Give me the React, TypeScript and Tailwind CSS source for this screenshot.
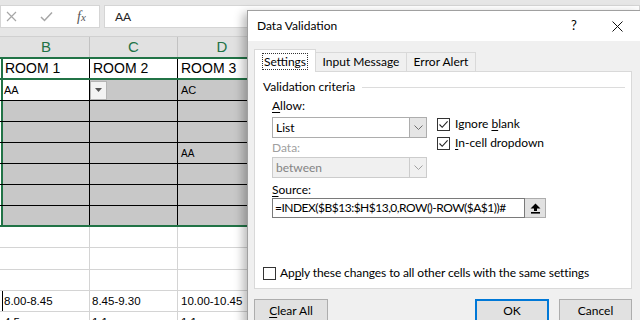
import React from 'react'

const Check = () => (
  <svg width="11" height="11" viewBox="0 0 11 11" className="block">
    <path d="M1.5 5.5 L4.2 8.3 L9.6 2.4" fill="none" stroke="#222" strokeWidth="1.1" />
  </svg>
)

const CheckBox = ({ checked }: { checked?: boolean }) => (
  <div className="w-[13px] h-[13px] shrink-0 border border-[#333] bg-white flex items-center justify-center">
    {checked && <Check />}
  </div>
)

const Chevron = ({ color = '#6d6d6d' }: { color?: string }) => (
  <svg width="9" height="5" viewBox="0 0 9 5">
    <path d="M0.5 0.5 L4.5 4.5 L8.5 0.5" fill="none" stroke={color} strokeWidth="1" />
  </svg>
)

const Select = ({ value, disabled }: { value: string; disabled?: boolean }) => (
  <div
    className={
      disabled
        ? 'w-[155px] h-[21px] flex border border-[#cccccc] bg-[#f0f0f0]'
        : 'w-[155px] h-[21px] flex border border-[#adadad] bg-white'
    }
  >
    <div className={disabled ? 'flex-1 pl-[3px] flex items-center text-[#838383]' : 'flex-1 pl-[3px] flex items-center'}>
      {value}
    </div>
    <div
      className={
        disabled
          ? 'w-[17px] border-l border-[#cccccc] bg-[#f0f0f0] flex items-center justify-center'
          : 'w-[17px] border-l border-[#adadad] bg-[#e5e5e5] flex items-center justify-center'
      }
    >
      <Chevron color={disabled ? '#a0a0a0' : '#6d6d6d'} />
    </div>
  </div>
)

function SheetRow({ className, stub, cells }: { className: string; stub: string; cells: [string, React.ReactNode][] }) {
  return (
    <div className={`flex shrink-0 ${className}`}>
      <div className={`w-[3px] shrink-0 ${stub}`} />
      {cells.map(([cls, content], i) => (
        <div key={i} className={`shrink-0 flex items-center overflow-hidden whitespace-nowrap ${cls}`}>
          {content}
        </div>
      ))}
    </div>
  )
}

const greyRow = (d?: React.ReactNode, last?: boolean) => (
  <SheetRow
    className={last ? 'h-[19px] bg-[#c8c8c8]' : 'h-[21px] bg-[#c8c8c8] border-b border-black'}
    stub="border-r-2 border-[#217346] bg-white"
    cells={[
      ['w-[87px] border-r border-black', null],
      ['w-[88px] border-r border-black', null],
      ['w-[88px] pl-[3px] text-[10px]', d],
    ]}
  />
)

const whiteRow = (h: string) => (
  <SheetRow
    className={`${h} bg-white border-b border-[#d4d4d4]`}
    stub="bg-white"
    cells={[
      ['w-[87px] border-r border-[#d4d4d4]', null],
      ['w-[88px] border-r border-[#d4d4d4]', null],
      ['w-[88px]', null],
    ]}
  />
)

export default function App() {
  return (
    <div className="relative w-[640px] h-[320px] overflow-hidden bg-white font-['Liberation_Sans',sans-serif] text-[11px] text-black">
      {/* formula bar */}
      <div className="h-[37px] bg-[#e6e6e6] pt-[5px] flex flex-col">
        <div className="flex h-[23px]">
          <div className="w-[100px] bg-white border border-[#d5d5d5] flex items-center">
            <svg width="11" height="11" viewBox="0 0 11 11" className="ml-[5px]">
              <path d="M1 1 L10 10 M10 1 L1 10" stroke="#a6a6a6" strokeWidth="1.2" />
            </svg>
            <svg width="13" height="11" viewBox="0 0 13 11" className="ml-[23px]">
              <path d="M1 6 L4.5 9.5 L12 1.5" fill="none" stroke="#a6a6a6" strokeWidth="1.5" />
            </svg>
            <span className="ml-[24px] font-['Liberation_Serif',serif] italic text-[14px] text-[#555] leading-none">
              f<span className="text-[11px]">x</span>
            </span>
          </div>
          <div className="ml-[4px] flex-1 bg-white border border-[#d5d5d5] flex items-center pl-[10px] font-['Lato',sans-serif] text-[12px] text-[#222]">
            AA
          </div>
        </div>
        <div className="mt-auto h-px bg-[#d0d0d0]" />
      </div>

      {/* column headers */}
      <SheetRow
        className="h-[22px] bg-[#e1e1e1] border-b-2 border-[#217346] text-[15px] text-[#217346]"
        stub="bg-[#e1e1e1]"
        cells={[
          ['w-[87px] justify-center border-r border-[#c2c2c2]', 'B'],
          ['w-[88px] justify-center border-r border-[#c2c2c2]', 'C'],
          ['w-[88px] justify-center', 'D'],
        ]}
      />

      {/* ROOM row */}
      <SheetRow
        className="h-[21px] bg-white border-b-2 border-[#217346] text-[14px]"
        stub="border-r-2 border-[#217346] bg-white"
        cells={[
          ['w-[87px] pl-[2px] border-r border-black', 'ROOM 1'],
          ['w-[88px] pl-[3px] border-r border-black', 'ROOM 2'],
          ['w-[88px] pl-[3px]', 'ROOM 3'],
        ]}
      />

      {/* row with dropdown */}
      <SheetRow
        className="h-[21px] bg-[#c8c8c8] border-b border-black"
        stub="border-r-2 border-[#217346] bg-white"
        cells={[
          ['w-[87px] pl-[1px] bg-white border-r border-black', 'AA'],
          [
            'w-[88px] border-r border-black',
            <div className="w-[17px] h-[19px] bg-[#f3f3f3] border border-[#b5b5b5] flex items-center justify-center">
              <svg width="7" height="4" viewBox="0 0 7 4">
                <path d="M0 0 H7 L3.5 4 Z" fill="#555" />
              </svg>
            </div>,
          ],
          ['w-[88px] pl-[3px]', 'AC'],
        ]}
      />

      {greyRow()}
      {greyRow()}
      {greyRow('AA')}
      {greyRow()}
      {greyRow()}
      {greyRow(undefined, true)}
      <div className="h-[2px] bg-[#217346]" />

      {whiteRow('h-[21px]')}
      {whiteRow('h-[22px]')}
      {whiteRow('h-[21px]')}
      <SheetRow
        className="h-[21px] bg-white border-b border-[#d4d4d4] text-[11.5px]"
        stub="border-r border-black bg-white"
        cells={[
          ['w-[87px] pl-[1px] pt-[2px] border-r border-[#d4d4d4]', '8.00-8.45'],
          ['w-[88px] pl-[2px] pt-[2px] border-r border-[#d4d4d4]', '8.45-9.30'],
          ['w-[88px] pl-[3px] pt-[2px]', '10.00-10.45'],
        ]}
      />
      <SheetRow
        className="h-[12px] bg-white text-[11.5px] leading-[12px] items-start"
        stub="border-r border-black bg-white"
        cells={[
          ['w-[87px] pl-[1px] pt-[4px] border-r border-[#d4d4d4]', '4.5.'],
          ['w-[88px] pl-[2px] pt-[4px] border-r border-[#d4d4d4]', '1.1'],
          ['w-[88px] pl-[3px] pt-[4px]', '1.1'],
        ]}
      />

      {/* Data Validation dialog */}
      <div className="absolute left-[247px] top-[10px] w-[394px] h-[320px] bg-[#f0f0f0] border border-[#a0a0a0] shadow-[-4px_3px_9px_rgba(0,0,0,0.28)] font-['Lato',sans-serif] text-[12px] text-black flex flex-col">
        <div className="h-[30px] bg-white flex items-center shrink-0">
          <span className="flex-1 pl-[9px]">Data Validation</span>
          <span className="w-[40px] text-center text-[13px]">?</span>
          <span className="w-[46px] flex justify-center">
            <svg width="11" height="11" viewBox="0 0 11 11">
              <path d="M0.5 0.5 L10.5 10.5 M10.5 0.5 L0.5 10.5" stroke="#111" strokeWidth="1" />
            </svg>
          </span>
        </div>

        <div className="px-[6px] flex flex-col">
          {/* tabs */}
          <div className="flex items-end pt-[7px] h-[30px]">
            <div className="w-[62px] h-[23px] bg-white border border-[#d9d9d9] border-b-0 -mb-px relative z-10 flex items-center justify-center">
              <span className="px-[1px] leading-[15px] outline-1 outline-dotted outline-[#333]">Settings</span>
            </div>
            <div className="w-[91px] h-[19px] border-t border-r border-[#d9d9d9] flex items-center justify-center">Input Message</div>
            <div className="w-[69px] h-[19px] border-t border-r border-[#d9d9d9] flex items-center justify-center">Error Alert</div>
          </div>

          {/* panel */}
          <div className="w-[378px] h-[218px] bg-white border border-[#d9d9d9] flex flex-col">
            <div className="mt-[7px] flex items-center pl-[8px] leading-[16px]">
              <span>Validation criteria</span>
              <div className="flex-1 h-px bg-[#dcdcdc] ml-[7px] mr-[6px]" />
            </div>

            <div className="pl-[17px] flex flex-col leading-[16px]">
              <div className="mt-[3px]">
                <u className="underline-offset-2">A</u>llow:
              </div>
              <div className="mt-[3px] flex">
                <div className="flex flex-col">
                  <Select value="List" />
                  <div className="mt-[2px] text-[#a0a0a0]">Data:</div>
                  <div className="mt-[1px]">
                    <Select value="between" disabled />
                  </div>
                </div>
                <div className="ml-[10px] flex flex-col">
                  <div className="mt-[-1px] flex items-center gap-[5px]">
                    <CheckBox checked />
                    <span>
                      Ignore <u className="underline-offset-2">b</u>lank
                    </span>
                  </div>
                  <div className="mt-[3px] flex items-center gap-[5px]">
                    <CheckBox checked />
                    <span>
                      <u className="underline-offset-2">I</u>n-cell dropdown
                    </span>
                  </div>
                </div>
              </div>
              <div className="mt-[4px]">
                <u className="underline-offset-2">S</u>ource:
              </div>
              <div className="flex h-[20px]">
                <div className="w-[253px] border border-[#7a7a7a] bg-white flex items-center pl-[2px] whitespace-nowrap overflow-hidden tracking-[-0.5px]">
                  =INDEX($B$13:$H$13,0,ROW()-ROW($A$1))#
                </div>
                <div className="w-[21px] bg-[#e1e1e1] border border-[#adadad] border-l-0 flex items-center justify-center">
                  <svg width="11" height="11" viewBox="0 0 11 11">
                    <path d="M5.5 0.5 L10.5 5.5 H7 V8 H4 V5.5 H0.5 Z" fill="#000" />
                    <rect x="1" y="9" width="9" height="1.6" fill="#000" />
                  </svg>
                </div>
              </div>
            </div>

            <div className="mt-auto mb-[7px] pl-[8px] flex items-center gap-[4px] leading-[16px]">
              <CheckBox />
              <span className="tracking-[-0.1px]">
                Ap<u className="underline-offset-2">p</u>ly these changes to all other cells with the same settings
              </span>
            </div>
          </div>

          {/* buttons */}
          <div className="mt-[10px] flex w-[378px]">
            <div className="w-[74px] h-[24px] bg-[#e1e1e1] border border-[#adadad] flex items-center justify-center">
              <span>
                <u className="underline-offset-2">C</u>lear All
              </span>
            </div>
            <div className="ml-[147px] w-[74px] h-[24px] bg-[#e1e1e1] border-2 border-[#0078d7] flex items-center justify-center">
              OK
            </div>
            <div className="ml-[10px] w-[73px] h-[24px] bg-[#e1e1e1] border border-[#adadad] flex items-center justify-center">
              Cancel
            </div>
          </div>
        </div>
      </div>
    </div>
  )
}
